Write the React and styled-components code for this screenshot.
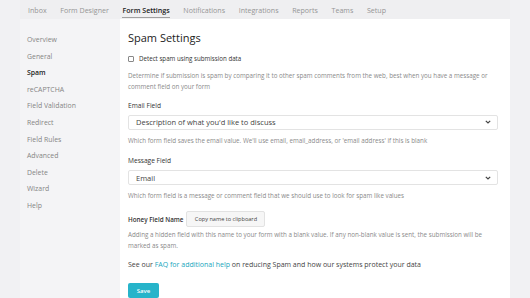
import React from "react";
import styled, { createGlobalStyle } from "styled-components";

const Global = createGlobalStyle`
  html, body { margin: 0; padding: 0; background: #f1f1f3; }
  body { font-family: "Open Sans", "Liberation Sans", sans-serif; color: #333; }
  * { box-sizing: border-box; }
`;

const Page = styled.div`
  width: 530px;
  height: 298px;
  overflow: hidden;
  padding: 0 20px;
  background: #f1f1f3;
`;

const Frame = styled.div`
  width: 490px;
  display: flex;
  flex-direction: column;
`;

const Nav = styled.nav`
  height: 19px;
  display: flex;
  align-items: stretch;
  padding-left: 8px;
  background: #efeff1;
`;

const Tab = styled.a`
  display: flex;
  align-items: center;
  margin-right: 13.6px;
  font-size: 7.1px;
  color: ${p => (p.$active ? "#222" : "#959595")};
  font-weight: ${p => (p.$active ? 600 : 400)};
  position: relative;
  &::after {
    content: "";
    display: ${p => (p.$active ? "block" : "none")};
    position: absolute;
    left: 0;
    right: 0;
    bottom: 1px;
    height: 1px;
    background: #a0a0a0;
  }
`;

const Body = styled.div`
  display: flex;
  height: 279px;
`;

const Side = styled.aside`
  width: 100px;
  background: #f4f4f6;
  padding: 13px 0 0 7px;
  display: flex;
  flex-direction: column;
`;

const SideItem = styled.div`
  height: 16.6px;
  line-height: 16.6px;
  font-size: 6.9px;
  color: ${p => (p.$active ? "#222" : "#858585")};
  font-weight: ${p => (p.$active ? 600 : 400)};
`;

const Main = styled.main`
  flex: 1;
  background: #fff;
  padding: 11px 12px 0 8px;
  display: flex;
  flex-direction: column;
`;

const Title = styled.h1`
  margin: 0;
  font-size: 11px;
  font-weight: 400;
  color: #222;
  line-height: 16px;
`;

const CheckRow = styled.label`
  display: flex;
  align-items: center;
  gap: 5px;
  margin-top: 8px;
  font-size: 6.2px;
  color: #333;
  line-height: 10px;
`;

const Box = styled.span`
  width: 6px;
  height: 6px;
  border: 1px solid #888;
  border-radius: 1px;
  background: #fff;
`;

const Help = styled.p`
  margin: ${p => p.$mt || "6px"} 0 0;
  font-size: 6.25px;
  line-height: 10.5px;
  color: #8a8a8a;
`;

const Label = styled.div`
  margin-top: ${p => p.$mt || "10px"};
  font-size: 6.6px;
  line-height: 10px;
  color: #333;
`;

const Select = styled.div`
  margin-top: 4px;
  height: 16px;
  border: 1px solid #e3e3e3;
  border-radius: 2px;
  display: flex;
  align-items: center;
  justify-content: space-between;
  padding: 0 6px 0 7px;
  font-size: 7.5px;
  color: #444;
`;

const Chevron = () => (
  <svg width="6" height="4" viewBox="0 0 6 4">
    <path d="M0.8 0.8 L3 3 L5.2 0.8" fill="none" stroke="#444" strokeWidth="1.2" />
  </svg>
);

const HoneyRow = styled.div`
  margin-top: 10px;
  display: flex;
  align-items: center;
  gap: 3px;
`;

const Bold = styled.span`
  font-size: 6.3px;
  font-weight: 600;
  color: #333;
`;

const Btn = styled.button`
  height: 16px;
  width: 79px;
  padding: 0;
  border: 1px solid #e2e2e2;
  background: #f6f6f6;
  border-radius: 2px;
  font-family: inherit;
  font-size: 5.6px;
  color: #444;
`;

const Faq = styled.p`
  margin: 8px 0 0;
  font-size: 7px;
  line-height: 11px;
  color: #444;
  a { color: #20a6bd; text-decoration: none; }
`;

const Save = styled.button`
  margin-top: 13px;
  width: 31px;
  height: 16px;
  border: none;
  border-radius: 2px;
  background: #27b4ca;
  color: #fff;
  font-family: inherit;
  font-size: 6px;
  font-weight: 600;
  padding: 0;
`;

const tabs = ["Inbox", "Form Designer", "Form Settings", "Notifications", "Integrations", "Reports", "Teams", "Setup"];
const side = ["Overview", "General", "Spam", "reCAPTCHA", "Field Validation", "Redirect", "Field Rules", "Advanced", "Delete", "Wizard", "Help"];

export default function App() {
  return (
    <Page>
      <Global />
      <Frame>
        <Nav>
          {tabs.map(t => (
            <Tab key={t} $active={t === "Form Settings"}>{t}</Tab>
          ))}
        </Nav>
        <Body>
          <Side>
            {side.map(s => (
              <SideItem key={s} $active={s === "Spam"}>{s}</SideItem>
            ))}
          </Side>
          <Main>
            <Title>Spam Settings</Title>
            <CheckRow><Box />Detect spam using submission data</CheckRow>
            <Help $mt="7px">
              Determine if submission is spam by comparing it to other spam comments from the web, best when you have a message or comment field on your form
            </Help>
            <Label $mt="9px">Email Field</Label>
            <Select>Description of what you'd like to discuss<Chevron /></Select>
            <Help>Which form field saves the email value. We'll use email, email_address, or 'email address' if this is blank</Help>
            <Label>Message Field</Label>
            <Select>Email<Chevron /></Select>
            <Help>Which form field is a message or comment field that we should use to look for spam like values</Help>
            <HoneyRow>
              <Bold>Honey Field Name</Bold>
              <Btn>Copy name to clipboard</Btn>
            </HoneyRow>
            <Help $mt="3px">Adding a hidden field with this name to your form with a blank value. If any non-blank value is sent, the submission will be marked as spam.</Help>
            <Faq>See our <a>FAQ for additional help</a> on reducing Spam and how our systems protect your data</Faq>
            <Save>Save</Save>
          </Main>
        </Body>
      </Frame>
    </Page>
  );
}
